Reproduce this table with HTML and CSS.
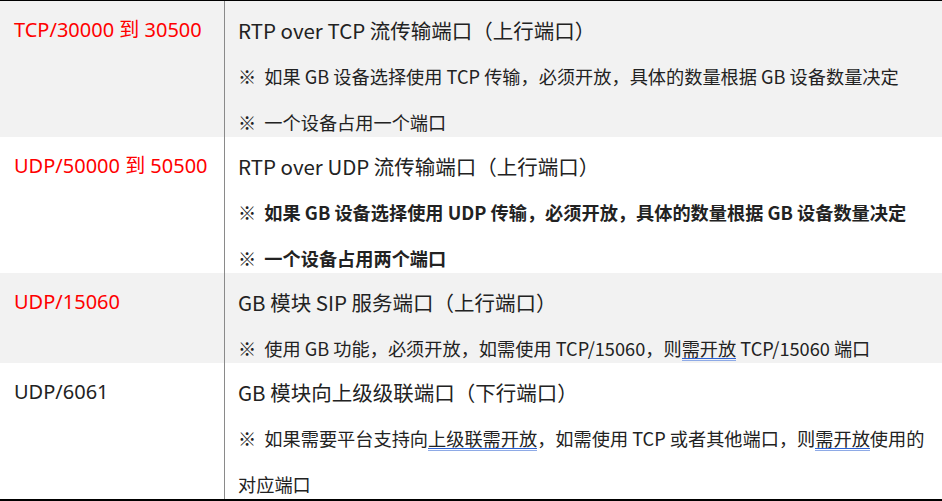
FILE: index.html
```html
<!DOCTYPE html>
<html>
<head>
    <title>GB 端口说明</title>
    <link rel="stylesheet" href="styles.css">
</head>
<body>
    <div class="port-table">
        <!-- TCP stream ports -->
        <div class="row shaded">
            <div class="port red">TCP/30000 到 30500</div>
            <div class="desc">
                <p class="title">RTP over TCP 流传输端口（上行端口）</p>
                <p>※ &nbsp;如果 GB 设备选择使用 TCP 传输，必须开放，具体的数量根据 GB 设备数量决定</p>
                <p>※ &nbsp;一个设备占用一个端口</p>
            </div>
        </div>

        <!-- UDP stream ports -->
        <div class="row">
            <div class="port red">UDP/50000 到 50500</div>
            <div class="desc">
                <p class="title">RTP over UDP 流传输端口（上行端口）</p>
                <p>※ &nbsp;<strong>如果 GB 设备选择使用 UDP 传输，必须开放，具体的数量根据 GB 设备数量决定</strong></p>
                <p>※ &nbsp;<strong>一个设备占用两个端口</strong></p>
            </div>
        </div>

        <!-- SIP -->
        <div class="row shaded">
            <div class="port red">UDP/15060</div>
            <div class="desc">
                <p class="title">GB 模块 SIP 服务端口（上行端口）</p>
                <p>※ &nbsp;使用 GB 功能，必须开放，如需使用 TCP/15060，则<span class="mark">需开放</span> TCP/15060 端口</p>
            </div>
        </div>

        <!-- cascade -->
        <div class="row">
            <div class="port">UDP/6061</div>
            <div class="desc">
                <p class="title">GB 模块向上级级联端口（下行端口）</p>
                <p>※ &nbsp;如果需要平台支持向<span class="mark">上级联需开放</span>，如需使用 TCP 或者其他端口，则<span class="mark">需开放</span>使用的<br>对应端口</p>
            </div>
        </div>
    </div>
</body>
</html>
```

FILE: styles.css
```css
/* General */
body {
    margin: 0;
    background-color: #fff;
    color: #222;
    font-family: "Noto Sans CJK SC", sans-serif;
}

/* Table */
.port-table {
    border-top: 1px solid #000;
    border-bottom: 2px solid #000;
}
.row {
    display: flex;
}
.row.shaded {
    background-color: #f2f2f2;
}
.port {
    width: 210px;
    flex-shrink: 0;
    padding: 6px 0 0 14px;
    font-family: "Noto Sans", "Noto Sans CJK SC", sans-serif;
    font-size: 20px;
    line-height: 46px;
    border-right: 1px solid #8a8a8a;
}
.port.red {
    color: #ff0000;
}
.desc {
    flex: 1;
    padding: 6px 13px 0;
    font-size: 18.2px;
    line-height: 46px;
}
.desc p {
    margin: 0;
}
.desc p.title {
    font-size: 20.5px;
}
.desc p:last-child {
    margin-bottom: -8px;
}
.desc strong {
    font-weight: bold;
}

/* Double blue underline */
.mark {
    background-image:
        linear-gradient(#2c62d3, #2c62d3),
        linear-gradient(#8eaae6, #8eaae6);
    background-size: 100% 1px, 100% 1px;
    background-position: left bottom 2px, left bottom;
    background-repeat: no-repeat;
}
```
